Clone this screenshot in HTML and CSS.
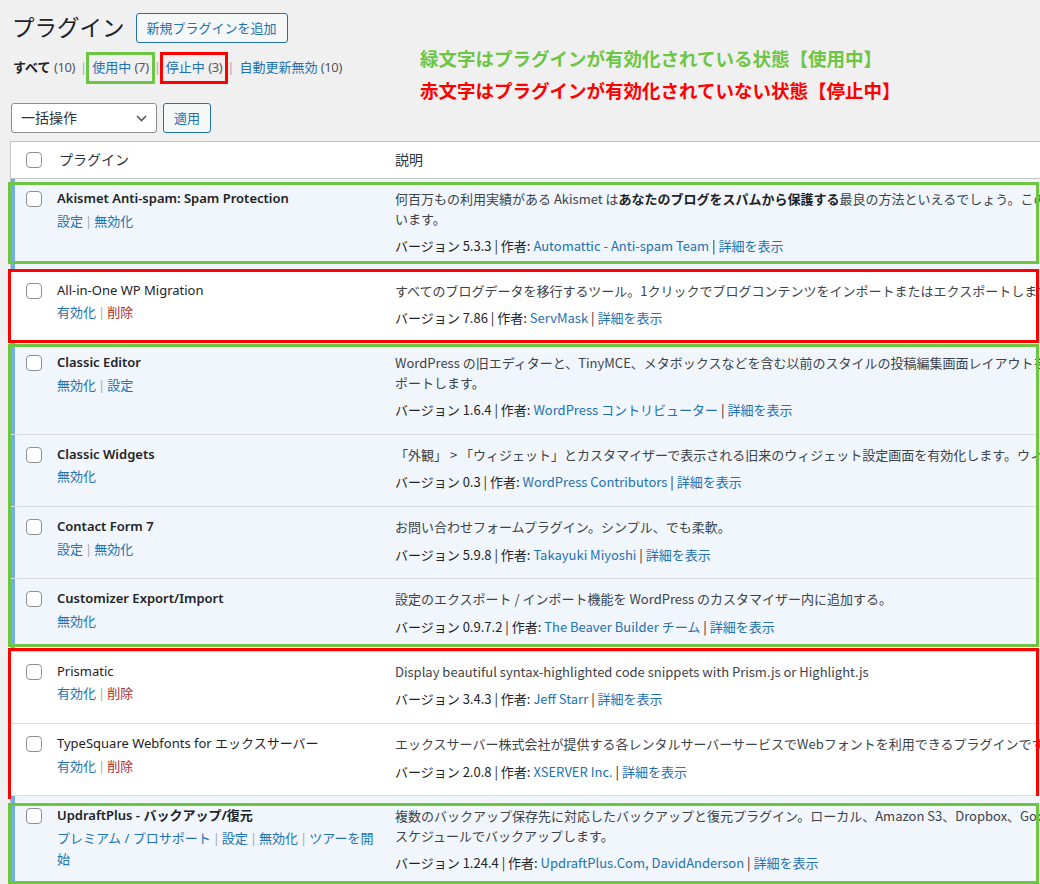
FILE: index.html
```html
<!DOCTYPE html>
<html lang="ja">
<head>
<meta charset="utf-8">
<title>プラグイン</title>
<link rel="stylesheet" href="styles.css">
</head>
<body>
<div class="wrap">
  <div class="head">
    <div class="head-main">
      <div class="title-row">
        <h1>プラグイン</h1>
        <a class="btn">新規プラグインを追加</a>
      </div>
      <ul class="filters">
        <li><b class="current">すべて</b> <span class="count">(10)</span></li>
        <li class="sep">|</li>
        <li class="mark mark-green"><a>使用中 <span class="count">(7)</span></a></li>
        <li class="sep">|</li>
        <li class="mark mark-red"><a>停止中 <span class="count">(3)</span></a></li>
        <li class="sep">|</li>
        <li><a>自動更新無効 <span class="count">(10)</span></a></li>
      </ul>
      <div class="bulk">
        <div class="select">一括操作<svg class="chev" width="11" height="7" viewBox="0 0 11 7"><polyline points="1,1 5.5,5.5 10,1" fill="none" stroke="#50575e" stroke-width="1.6"/></svg></div>
        <a class="btn btn-apply">適用</a>
      </div>
    </div>
    <div class="note">
      <p class="note-green">緑文字はプラグインが有効化されている状態【使用中】</p>
      <p class="note-red">赤文字はプラグインが有効化されていない状態【停止中】</p>
    </div>
  </div>

  <div class="plugins">
    <div class="thead">
      <div class="c-check"><span class="cb"></span></div>
      <div class="c-name">プラグイン</div>
      <div class="c-desc">説明</div>
    </div>

    <div class="group box-green g1">
      <div class="row active">
        <div class="c-check"><span class="cb"></span></div>
        <div class="c-name">
          <strong class="pname">Akismet Anti-spam: Spam Protection</strong>
          <div class="actions"><a>設定</a><span class="asep">|</span><a>無効化</a></div>
        </div>
        <div class="c-desc">
          <p>何百万もの利用実績がある Akismet は<b>あなたのブログをスパムから保護する</b>最良の方法といえるでしょう。このプラグインはあなたが寝ている間もサイトを守って<br>います。</p>
          <div class="ver">バージョン 5.3.3 | 作者: <a>Automattic - Anti-spam Team</a> | <a>詳細を表示</a></div>
        </div>
      </div>
    </div>

    <div class="group box-red r1">
      <div class="row inactive">
        <div class="c-check"><span class="cb"></span></div>
        <div class="c-name">
          <span class="pname">All-in-One WP Migration</span>
          <div class="actions"><a>有効化</a><span class="asep">|</span><a class="del">削除</a></div>
        </div>
        <div class="c-desc">
          <p>すべてのブログデータを移行するツール。1クリックでブログコンテンツをインポートまたはエクスポートします。</p>
          <div class="ver">バージョン 7.86 | 作者: <a>ServMask</a> | <a>詳細を表示</a></div>
        </div>
      </div>
    </div>

    <div class="group box-green g2">
      <div class="row active">
        <div class="c-check"><span class="cb"></span></div>
        <div class="c-name">
          <strong class="pname">Classic Editor</strong>
          <div class="actions"><a>無効化</a><span class="asep">|</span><a>設定</a></div>
        </div>
        <div class="c-desc">
          <p>WordPress の旧エディターと、TinyMCE、メタボックスなどを含む以前のスタイルの投稿編集画面レイアウトを有効化し、それらをサ<br>ポートします。</p>
          <div class="ver">バージョン 1.6.4 | 作者: <a>WordPress コントリビューター</a> | <a>詳細を表示</a></div>
        </div>
      </div>
      <div class="row active">
        <div class="c-check"><span class="cb"></span></div>
        <div class="c-name">
          <strong class="pname">Classic Widgets</strong>
          <div class="actions"><a>無効化</a></div>
        </div>
        <div class="c-desc">
          <p>「外観」 &gt; 「ウィジェット」とカスタマイザーで表示される旧来のウィジェット設定画面を有効化します。ウィジェットブロックエディターは無効化されます。</p>
          <div class="ver">バージョン 0.3 | 作者: <a>WordPress Contributors</a> | <a>詳細を表示</a></div>
        </div>
      </div>
      <div class="row active">
        <div class="c-check"><span class="cb"></span></div>
        <div class="c-name">
          <strong class="pname">Contact Form 7</strong>
          <div class="actions"><a>設定</a><span class="asep">|</span><a>無効化</a></div>
        </div>
        <div class="c-desc">
          <p>お問い合わせフォームプラグイン。シンプル、でも柔軟。</p>
          <div class="ver">バージョン 5.9.8 | 作者: <a>Takayuki Miyoshi</a> | <a>詳細を表示</a></div>
        </div>
      </div>
      <div class="row active">
        <div class="c-check"><span class="cb"></span></div>
        <div class="c-name">
          <strong class="pname">Customizer Export/Import</strong>
          <div class="actions"><a>無効化</a></div>
        </div>
        <div class="c-desc">
          <p>設定のエクスポート / インポート機能を WordPress のカスタマイザー内に追加する。</p>
          <div class="ver">バージョン 0.9.7.2 | 作者: <a>The Beaver Builder チーム</a> | <a>詳細を表示</a></div>
        </div>
      </div>
    </div>

    <div class="group box-red r2">
      <div class="row inactive">
        <div class="c-check"><span class="cb"></span></div>
        <div class="c-name">
          <span class="pname">Prismatic</span>
          <div class="actions"><a>有効化</a><span class="asep">|</span><a class="del">削除</a></div>
        </div>
        <div class="c-desc">
          <p>Display beautiful syntax-highlighted code snippets with Prism.js or Highlight.js</p>
          <div class="ver">バージョン 3.4.3 | 作者: <a>Jeff Starr</a> | <a>詳細を表示</a></div>
        </div>
      </div>
      <div class="row inactive">
        <div class="c-check"><span class="cb"></span></div>
        <div class="c-name">
          <span class="pname">TypeSquare Webfonts for エックスサーバー</span>
          <div class="actions"><a>有効化</a><span class="asep">|</span><a class="del">削除</a></div>
        </div>
        <div class="c-desc">
          <p>エックスサーバー株式会社が提供する各レンタルサーバーサービスでWebフォントを利用できるプラグインです。</p>
          <div class="ver">バージョン 2.0.8 | 作者: <a>XSERVER Inc.</a> | <a>詳細を表示</a></div>
        </div>
      </div>
    </div>

    <div class="group box-green g3">
      <div class="row active">
        <div class="c-check"><span class="cb"></span></div>
        <div class="c-name">
          <strong class="pname">UpdraftPlus - <span class="heavy">バックアップ/復元</span></strong>
          <div class="actions"><a>プレミアム / プロサポート</a><span class="asep">|</span><a>設定</a><span class="asep">|</span><a>無効化</a><span class="asep">|</span><a>ツアーを開始</a></div>
        </div>
        <div class="c-desc">
          <p>複数のバックアップ保存先に対応したバックアップと復元プラグイン。ローカル、Amazon S3、Dropbox、Google Drive、Rackspace、(S)FTP、WebDAV、メールへ手動または<br>スケジュールでバックアップします。</p>
          <div class="ver">バージョン 1.24.4 | 作者: <a>UpdraftPlus.Com, DavidAnderson</a> | <a>詳細を表示</a></div>
        </div>
      </div>
    </div>
  </div>
</div>
</body>
</html>
```

FILE: styles.css
```css
html, body {
  margin: 0;
  padding: 0;
  overflow: hidden;
}
body {
  width: 1040px;
  height: 884px;
  background: #f0f0f1;
  color: #3c434a;
  font-family: "Noto Sans", "Noto Sans CJK JP", sans-serif;
  font-size: 13px;
  line-height: 19.5px;
}
a {
  color: #2271b1;
  text-decoration: none;
}
.wrap {
  padding-left: 10px;
}

/* ---------- header area ---------- */
.head {
  display: flex;
}
.head-main {
  width: 410px;
  flex: none;
}
.title-row {
  display: flex;
  align-items: center;
  height: 32px;
  padding-top: 12px;
}
h1 {
  margin: 0 11px 0 2px;
  font-size: 22.5px;
  font-weight: 400;
  line-height: 32px;
  color: #1d2327;
}
.btn {
  display: inline-block;
  box-sizing: border-box;
  height: 30px;
  line-height: 28px;
  padding: 0 10px;
  border: 1px solid #2271b1;
  border-radius: 3px;
  background: #f6f7f7;
  color: #2271b1;
  font-size: 13px;
  white-space: nowrap;
}
.filters {
  display: flex;
  align-items: center;
  list-style: none;
  margin: 13px 0 0;
  padding: 0 0 0 3px;
  height: 20px;
  line-height: 20px;
}
.filters li {
  white-space: nowrap;
}
.current {
  color: #1d2327;
  font-weight: 600;
}
.count {
  color: #50575e;
  letter-spacing: -0.4px;
}
.sep {
  color: #a7aaad;
  margin: 0 5px;
}
.mark {
  position: relative;
}
.mark::after {
  content: "";
  position: absolute;
  left: -6px;
  right: -6px;
  top: -5px;
  bottom: -7px;
  border: 3px solid;
}
.mark-green::after {
  border-color: #6cc644;
}
.mark-red::after {
  border-color: #ff0000;
}
.bulk {
  display: flex;
  margin-top: 26px;
  height: 30px;
}
.select {
  box-sizing: border-box;
  width: 146px;
  height: 30px;
  margin-left: 1px;
  padding: 0 9px 0 9px;
  border: 1px solid #8c8f94;
  border-radius: 3px;
  background: #fff;
  color: #2c3338;
  font-size: 14px;
  line-height: 28px;
  display: flex;
  align-items: center;
  justify-content: space-between;
}
.chev {
  display: block;
}
.btn-apply {
  margin-left: 6px;
  width: 48px;
  padding: 0;
  text-align: center;
}
.note {
  margin-top: 46px;
  font-family: "Noto Sans CJK JP", sans-serif;
  font-size: 18.5px;
  font-weight: 700;
  line-height: 24px;
}
.note p {
  margin: 0;
  white-space: nowrap;
}
.note-green {
  color: #6cc644;
}
.note-red {
  color: #ff0000;
  margin-top: 8px !important;
}

/* ---------- plugin table ---------- */
.plugins {
  margin-top: 8px;
  width: 1300px;
  border: 1px solid #c3c4c7;
  background: #fff;
}
.thead {
  display: flex;
  align-items: center;
  height: 36px;
  border-bottom: 1px solid #c3c4c7;
  color: #2c3338;
  font-size: 14px;
}
.c-check {
  width: 36px;
  flex: none;
  box-sizing: border-box;
  padding-left: 15px;
}
.c-name {
  width: 338px;
  flex: none;
  box-sizing: border-box;
  padding-left: 10px;
  padding-right: 10px;
}
.thead .c-name {
  padding-left: 12px;
}
.c-desc {
  flex: 1;
  padding-left: 10px;
  font-family: "Noto Sans CJK JP", sans-serif;
  white-space: nowrap;
}
.cb {
  display: block;
  box-sizing: border-box;
  width: 16px;
  height: 16px;
  border: 1px solid #8c8f94;
  border-radius: 4px;
  background: #fff;
}
.group {
  position: relative;
}
.group::after {
  content: "";
  position: absolute;
  left: -3px;
  width: 1031px;
  box-sizing: border-box;
  border: 3px solid;
  pointer-events: none;
}
.box-green::after {
  border-color: #6cc644;
}
.box-red::after {
  border-color: #ff0000;
}
.g1::after { top: 3px; bottom: 7px; }
.r1::after { top: -2px; bottom: 0; }
.g2::after { top: 1px; bottom: 5px; }
.r2::after { top: -4px; bottom: -3px; }
.g3::after { top: 7px; bottom: 4px; }

.row {
  display: flex;
  align-items: flex-start;
  padding: 10px 0 14.3px;
  border-bottom: 1px solid #dcdcde;
}
.row.active {
  background: #f0f6fc;
  box-shadow: inset 4px 0 0 #72aee6;
}
.row.inactive {
  background: #fff;
}
.row .cb {
  margin-top: 2px;
}
.pname {
  display: block;
  color: #1d2327;
  font-weight: 400;
}
strong.pname {
  font-weight: 600;
}
.heavy {
  font-weight: 700;
}
.actions {
  margin-top: 2px;
  line-height: 21px;
}
.asep {
  color: #a7aaad;
  margin: 0 2px;
}
.del {
  color: #b32d2e;
}
.c-desc p {
  margin: 0;
}
.c-desc b {
  font-weight: 700;
  color: #1d2327;
}
.ver {
  margin-top: 8px;
  color: #1d2327;
}
```
